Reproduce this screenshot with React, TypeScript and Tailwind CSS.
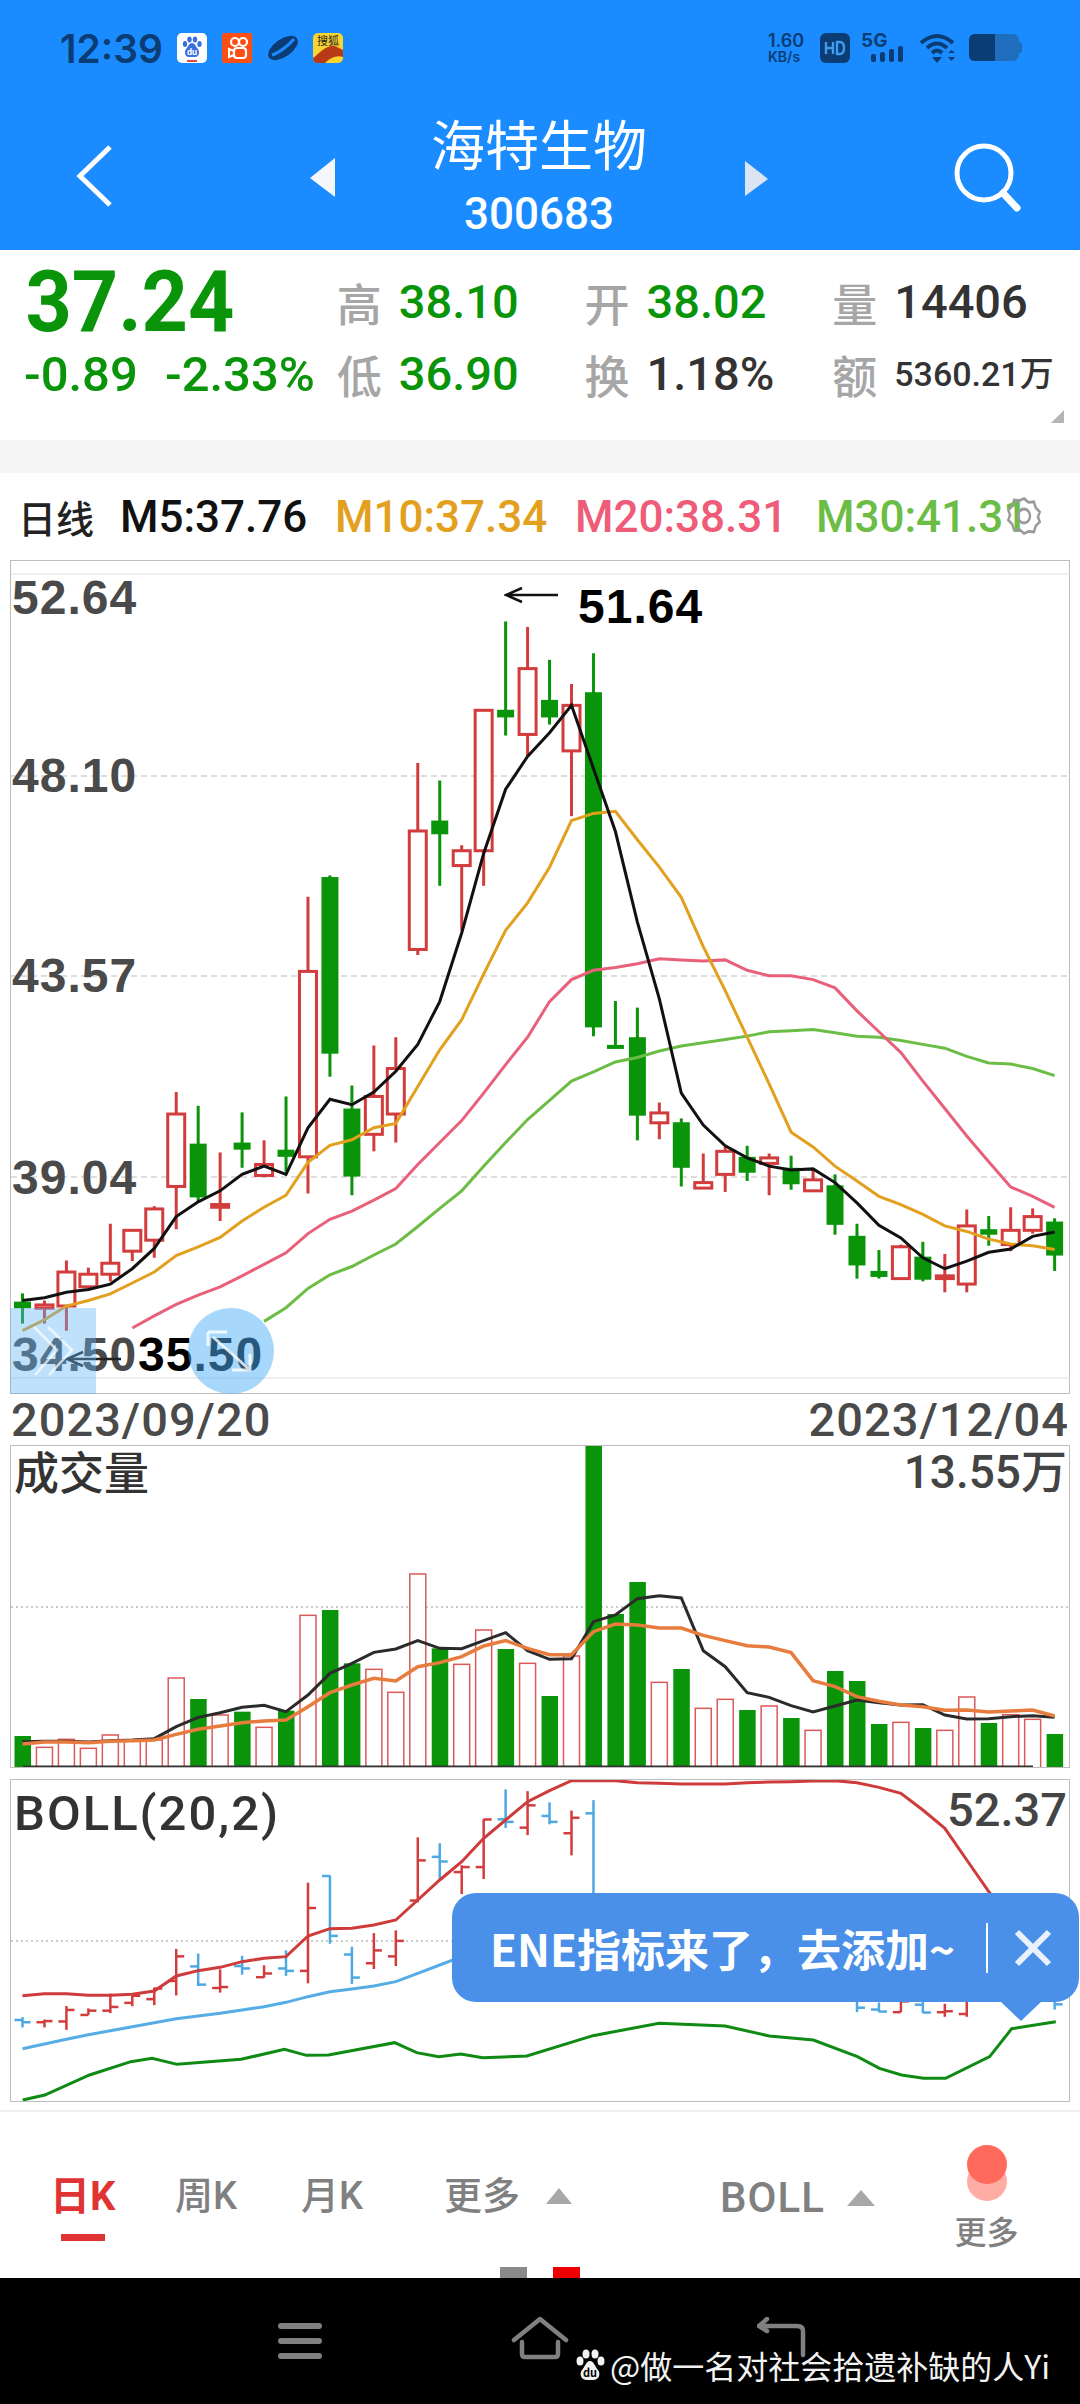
import React from "react";

const green = "#099409";
const red = "#d23c3c";

type Candle = [string, number, number, number, number];

// high, low, body top, body bottom
const candles: Candle[] = [
  ["g", 1337, 1392, 1352, 1364],
  ["r", 1350, 1392, 1358, 1364],
  ["r", 1277, 1405, 1298, 1360],
  ["r", 1290, 1325, 1302, 1325],
  ["r", 1210, 1315, 1282, 1302],
  ["r", 1222, 1278, 1222, 1260],
  ["r", 1178, 1272, 1183, 1240],
  ["r", 970, 1220, 1010, 1142],
  ["g", 995, 1170, 1064, 1162],
  ["r", 1080, 1205, 1175, 1180],
  ["g", 1007, 1108, 1062, 1075],
  ["r", 1058, 1125, 1102, 1122],
  ["g", 978, 1115, 1075, 1088],
  ["r", 614, 1155, 750, 1088],
  ["g", 575, 942, 578, 900],
  ["g", 958, 1158, 1000, 1124],
  ["r", 885, 1078, 978, 1047],
  ["r", 870, 1062, 927, 1010],
  ["r", 370, 720, 494, 710],
  ["g", 402, 594, 475, 500],
  ["r", 520, 675, 530, 557],
  ["r", 272, 594, 274, 530],
  ["g", 112, 320, 273, 287],
  ["r", 122, 358, 198, 318],
  ["g", 182, 300, 255, 287],
  ["r", 226, 467, 265, 348],
  ["g", 170, 868, 241, 852],
  ["g", 804, 890, 884, 889],
  ["g", 816, 1058, 870, 1013],
  ["r", 989, 1056, 1008, 1026],
  ["g", 1018, 1142, 1025, 1108],
  ["r", 1082, 1145, 1135, 1145],
  ["r", 1070, 1152, 1078, 1120],
  ["g", 1068, 1132, 1088, 1117],
  ["r", 1082, 1158, 1090, 1100],
  ["g", 1086, 1148, 1108, 1138],
  ["r", 1110, 1150, 1130, 1150],
  ["g", 1120, 1230, 1140, 1212],
  ["g", 1210, 1310, 1232, 1286],
  ["g", 1258, 1310, 1296, 1307],
  ["r", 1248, 1310, 1252, 1310],
  ["g", 1243, 1315, 1270, 1312],
  ["r", 1265, 1335, 1305, 1310],
  ["r", 1184, 1335, 1214, 1320],
  ["g", 1196, 1250, 1220, 1230],
  ["r", 1180, 1260, 1222, 1248],
  ["r", 1182, 1228, 1197, 1222],
  ["g", 1200, 1296, 1206, 1268],
];

const m5 = [1350, 1345, 1335, 1330, 1320, 1292, 1255, 1197, 1170, 1150, 1120, 1105, 1120, 1035, 983, 993, 970, 932, 883, 805, 680, 535, 418, 358, 315, 265, 380, 495, 660, 800, 972, 1030, 1068, 1090, 1105, 1112, 1110, 1135, 1172, 1213, 1236, 1272, 1292, 1278, 1262, 1256, 1233, 1225];
const m10 = [1405, 1385, 1360, 1350, 1338, 1318, 1298, 1268, 1252, 1235, 1205, 1180, 1158, 1098, 1067, 1057, 1035, 1027, 960, 893, 838, 755, 675, 625, 560, 475, 462, 458, 510, 560, 615, 705, 785, 870, 955, 1043, 1070, 1105, 1132, 1160, 1175, 1193, 1214, 1224, 1238, 1247, 1250, 1257];
const m20 = [1400, 1378, 1357, 1340, 1325, 1305, 1284, 1263, 1228, 1202, 1187, 1167, 1146, 1102, 1062, 1022, 972, 920, 870, 805, 765, 748, 743, 736, 727, 729, 731, 729, 748, 758, 758, 765, 780, 822, 860, 898, 950, 1000, 1050, 1097, 1143, 1160, 1180];
const m30 = [1388, 1363, 1328, 1303, 1288, 1267, 1247, 1215, 1182, 1150, 1105, 1062, 1020, 985, 950, 933, 915, 907, 895, 886, 880, 874, 868, 860, 858, 856, 862, 868, 870, 876, 883, 890, 905, 917, 919, 927, 940];

const volumes: [string, number][] = [
  ["g", 1008], ["r", 1042], ["r", 1018], ["r", 1045], ["r", 1005], ["r", 1020], ["r", 1020], ["r", 834],
  ["g", 897], ["r", 945], ["g", 935], ["r", 982], ["g", 932], ["r", 646], ["g", 630], ["g", 790],
  ["r", 808], ["r", 877], ["r", 522], ["g", 745], ["r", 793], ["r", 690], ["g", 747], ["r", 790],
  ["g", 888], ["r", 768], ["g", 137], ["g", 642], ["g", 546], ["r", 847], ["g", 807], ["r", 925],
  ["r", 898], ["g", 930], ["r", 918], ["g", 954], ["r", 991], ["g", 813], ["g", 843], ["g", 972],
  ["r", 967], ["g", 984], ["r", 991], ["r", 891], ["g", 969], ["r", 944], ["r", 958], ["g", 1002],
];
const volBlack = [1025, 1024, 1024, 1026, 1022, 1020, 1016, 980, 952, 938, 922, 916, 935, 885, 820, 790, 757, 747, 722, 745, 746, 722, 698, 752, 778, 776, 665, 645, 596, 587, 594, 752, 800, 878, 892, 917, 936, 918, 900, 908, 915, 914, 945, 957, 956, 950, 947, 952];
const volOrange = [1032, 1026, 1026, 1028, 1024, 1022, 1020, 1003, 988, 978, 968, 963, 960, 920, 878, 855, 835, 843, 800, 788, 770, 738, 722, 745, 764, 764, 695, 672, 675, 684, 684, 706, 722, 737, 741, 758, 842, 860, 890, 904, 915, 920, 931, 930, 936, 933, 930, 948];

const bollUpper = [707, 701, 701, 706, 706, 703, 693, 648, 632, 622, 605, 595, 590, 528, 506, 505, 495, 480, 420, 360, 305, 235, 180, 125, 92, 62, 62, 62, 68, 70, 72, 72, 72, 68, 66, 65, 63, 62, 68, 82, 100, 150, 205, 300, 395, 470];
const bollMid = [866, 852, 838, 824, 812, 800, 788, 776, 768, 760, 750, 740, 727, 710, 695, 687, 678, 665, 640, 615, 590];
const bollLower: [number, number][] = [[33, 1020], [65, 1005], [130, 945], [190, 905], [221, 895], [257, 913], [350, 898], [413, 868], [445, 886], [477, 885], [573, 848], [605, 878], [637, 890], [669, 882], [701, 893], [765, 888], [861, 827], [957, 790], [1053, 798], [1117, 828], [1181, 840], [1245, 890], [1277, 925], [1309, 945], [1341, 955], [1373, 955], [1437, 890], [1469, 806], [1533, 785]];

const xOf = (i: number) => 22.5 + 21.96 * i;
const priceY = (z: number) => 560 + z / 1.823;
const volY = (z: number) => 1400 + z / 3;
const bollY = (z: number) => 1760 + z / 3;
// same candle data on the boll scale
const bollFromPrice = (z: number) => bollY(88 + 0.558 * (z - 112));

const pts = (ys: number[], start: number, yFn: (n: number) => number) =>
  ys.map((y, i) => `${xOf(i + start)},${yFn(y)}`).join(" ");

function PriceChart() {
  return (
    <svg className="block" width="1060" height="832" viewBox="11 561 1060 832">
      <line x1="11" x2="1070" y1="574" y2="574" stroke="#dddddd" />
      <line x1="11" x2="1070" y1="1378" y2="1378" stroke="#dddddd" />
      {[776, 976, 1177].map((y) => (
        <line key={y} x1="11" x2="1070" y1={y} y2={y} stroke="#bbbbbb" strokeDasharray="6 4" />
      ))}
      {candles.map(([c, hi, lo, top, bot], i) => {
        const x = xOf(i);
        const color = c === "g" ? green : red;
        return (
          <g key={i}>
            <line x1={x} x2={x} y1={priceY(hi)} y2={priceY(lo)} stroke={color} strokeWidth="3" />
            {c === "g" ? (
              <rect x={x - 8.5} y={priceY(top)} width="17" height={Math.max(priceY(bot) - priceY(top), 4)} fill={color} />
            ) : (
              <rect x={x - 8.5} y={priceY(top)} width="17" height={Math.max(priceY(bot) - priceY(top), 2)} fill="#ffffff" stroke={color} strokeWidth="3" />
            )}
          </g>
        );
      })}
      <polyline points={pts(m30, 11, priceY)} fill="none" stroke="#6cbd45" strokeWidth="3" />
      <polyline points={pts(m20, 5, priceY)} fill="none" stroke="#e8607a" strokeWidth="3" />
      <polyline points={pts(m10, 0, priceY)} fill="none" stroke="#e2a01e" strokeWidth="3" />
      <polyline points={pts(m5, 0, priceY)} fill="none" stroke="#111111" strokeWidth="3" />
    </svg>
  );
}

function VolumeChart() {
  return (
    <svg className="block" width="1060" height="321" viewBox="11 1446 1060 321">
      <line x1="11" x2="1070" y1="1607" y2="1607" stroke="#cccccc" strokeWidth="2" strokeDasharray="2 3" />
      {volumes.map(([c, top], i) => {
        const x = xOf(i);
        return c === "g" ? (
          <rect key={i} x={x - 8} y={volY(top)} width="16.5" height={1768 - volY(top)} fill={green} />
        ) : (
          <rect key={i} x={x - 8} y={volY(top)} width="16" height={1768 - volY(top)} fill="#ffffff" stroke="#dc5a5a" strokeWidth="1.5" />
        );
      })}
      <line x1="23" x2="1033" y1="1767" y2="1767" stroke="#333333" strokeWidth="3" />
      <polyline points={pts(volBlack, 0, volY)} fill="none" stroke="#2b2b2b" strokeWidth="3" />
      <polyline points={pts(volOrange, 0, volY)} fill="none" stroke="#e87b3e" strokeWidth="3.5" />
    </svg>
  );
}

function BollChart() {
  return (
    <svg className="block" width="1060" height="321" viewBox="11 1780 1060 321">
      <line x1="11" x2="1070" y1="1941" y2="1941" stroke="#cccccc" strokeWidth="2" strokeDasharray="2 3" />
      {candles.map(([c, hi, lo, top, bot], i) => {
        const x = xOf(i);
        const color = c === "g" ? "#4ea8e2" : red;
        const open = c === "g" ? top : bot;
        const close = c === "g" ? bot : top;
        return (
          <g key={i} stroke={color} strokeWidth="2.5">
            <line x1={x} x2={x} y1={bollFromPrice(hi)} y2={bollFromPrice(lo)} />
            <line x1={x - 8} x2={x} y1={bollFromPrice(open)} y2={bollFromPrice(open)} />
            <line x1={x} x2={x + 8} y1={bollFromPrice(close)} y2={bollFromPrice(close)} />
          </g>
        );
      })}
      <polyline points={pts(bollUpper, 0, bollY)} fill="none" stroke="#cf3a3a" strokeWidth="3" />
      <polyline points={pts(bollMid, 0, bollY)} fill="none" stroke="#56ade6" strokeWidth="3" />
      <polyline
        points={bollLower.map(([x, y]) => `${x / 1.452},${bollY(y)}`).join(" ")}
        fill="none"
        stroke="#0f8a12"
        strokeWidth="3"
      />
    </svg>
  );
}

function StatusBar() {
  const ink = "#0b3c73";
  return (
    <div className="flex h-[96px] items-center pl-[60px]">
      <span className="w-[117px] text-[39px] leading-none font-semibold font-['Inter',sans-serif] text-[#0b3c73]">12:39</span>
      <svg width="30" height="30" viewBox="0 0 30 30" className="mr-[15px]">
        <rect width="30" height="30" rx="5" fill="#ffffff" />
        <ellipse cx="8" cy="11" rx="2.2" ry="3" fill="#3b6fe0" />
        <ellipse cx="12.5" cy="6.5" rx="2.2" ry="3" fill="#3b6fe0" />
        <ellipse cx="18" cy="6.5" rx="2.2" ry="3" fill="#3b6fe0" />
        <ellipse cx="22.5" cy="11" rx="2.2" ry="3" fill="#3b6fe0" />
        <path d="M15 10c-3 0-4 4-6 6-2 3-1 8 3 8h6c4 0 5-5 3-8-2-2-3-6-6-6z" fill="#3b6fe0" />
        <text x="15" y="22" fontSize="9" fontWeight="700" textAnchor="middle" fill="#ffffff">du</text>
        <rect x="10" y="27" width="10" height="2" fill="#e0483e" />
      </svg>
      <svg width="30" height="30" viewBox="0 0 30 30" className="mr-[15px]">
        <rect width="30" height="30" rx="2" fill="#fb4f14" />
        <circle cx="13" cy="9" r="4" fill="none" stroke="#ffffff" strokeWidth="2.2" />
        <circle cx="21" cy="9" r="4" fill="none" stroke="#ffffff" strokeWidth="2.2" />
        <rect x="12" y="15" width="12" height="10" rx="3" fill="none" stroke="#ffffff" strokeWidth="2.2" />
        <path d="M12 18l-5 -2v8l5-2" fill="none" stroke="#ffffff" strokeWidth="2" />
      </svg>
      <svg width="32" height="30" viewBox="0 0 32 30" className="mr-[14px]">
        <ellipse cx="16" cy="15" rx="9" ry="17" transform="rotate(55 16 15)" fill={ink} />
        <path d="M5 22C12 20 22 12 27 6" stroke="#1a8cff" strokeWidth="3" fill="none" />
      </svg>
      <svg width="30" height="30" viewBox="0 0 30 30">
        <rect width="30" height="30" rx="5" fill="#f9d32f" />
        <path d="M0 25C6 21 12 12 22 13L30 17V24C24 22 18 24 12 30H5Q0 30 0 25z" fill="#b83a14" />
        <text x="15" y="12" fontSize="11" textAnchor="middle" fill="#222222" fontFamily="Noto Sans CJK SC">搜狐</text>
      </svg>
      <div className="ml-[425px] flex w-[42px] flex-col font-['Inter',sans-serif] text-[#0b3c73] font-semibold">
        <span className="text-[18px] leading-[17px]">1.60</span>
        <span className="text-[14px] leading-[15px]">KB/s</span>
      </div>
      <svg width="31" height="30" viewBox="0 0 31 30" className="ml-[10px]">
        <rect width="30" height="30" rx="6" fill={ink} />
        <path d="M6 9v12M13 9v12M6 15h7M17 9v12h3q4 0 4-6t-4-6z" fill="none" stroke="#3d9bf0" strokeWidth="2.4" />
      </svg>
      <div className="relative ml-[10px] h-[30px] w-[46px]">
        <span className="absolute left-0 top-[-2px] text-[19px] leading-none font-bold font-['Inter',sans-serif] text-[#0b3c73]">5G</span>
        <svg width="46" height="30" viewBox="0 0 46 30">
          <rect x="10" y="21" width="5" height="8" rx="2" fill={ink} />
          <rect x="19" y="19" width="5" height="10" rx="2" fill={ink} />
          <rect x="28" y="16" width="5" height="13" rx="2" fill={ink} />
          <rect x="37" y="13" width="5" height="16" rx="2" fill={ink} />
        </svg>
      </div>
      <svg width="38" height="30" viewBox="0 0 38 30" className="ml-[12px]">
        <path d="M2 10Q18 -4 34 10M8 15Q18 6 28 15M13 20Q18 15 23 20" fill="none" stroke={ink} strokeWidth="4" />
        <path d="M13 24h10l-5 6zM29 20l3.5 -3 3.5 3zM29 24h7l-3.5 4z" fill={ink} />
      </svg>
      <svg width="54" height="28" viewBox="0 0 54 28" className="ml-[12px]">
        <rect width="50" height="27" rx="6" fill="#1f6dbd" />
        <path d="M6 0H26V27H6Q0 27 0 21V6Q0 0 6 0z" fill={ink} />
        <rect x="50" y="8" width="3" height="11" rx="1.5" fill="#1f6dbd" />
      </svg>
    </div>
  );
}

function NavHeader() {
  return (
    <div className="relative flex flex-1 items-start text-white">
      <div className="flex w-[310px] pl-[76px] pt-[49px]">
        <svg width="36" height="62" viewBox="0 0 36 62">
          <path d="M34 2L4 31L34 60" fill="none" stroke="#ffffff" strokeWidth="5" />
        </svg>
      </div>
      <svg width="25" height="39" viewBox="0 0 25 39" className="mt-[62px]">
        <path d="M25 0V39L0 20z" fill="#f4f8fc" />
      </svg>
      <div className="-ml-[1px] flex w-[410px] flex-col items-center pt-[17px]">
        <span className="text-[54px] leading-[60px] font-normal font-['Noto_Sans_CJK_SC',sans-serif]">海特生物</span>
        <span className="mt-[21px] text-[44px] leading-[40px] font-medium">300683</span>
      </div>
      <svg width="23" height="35" viewBox="0 0 23 35" className="ml-[1px] mt-[65px]">
        <path d="M0 0V35L23 18z" fill="#dbe5f2" />
      </svg>
      <svg width="68" height="70" viewBox="0 0 68 70" className="ml-[186px] mt-[47px]">
        <circle cx="30" cy="30" r="27" fill="none" stroke="#ffffff" strokeWidth="5" />
        <path d="M49 50L63 65" stroke="#ffffff" strokeWidth="7" strokeLinecap="round" />
      </svg>
    </div>
  );
}

function Stat({ label, value, color, small }: { label: string; value: string; color: string; small?: boolean }) {
  return (
    <div className="flex w-[248px] items-center">
      <span className="w-[62px] text-[45px] leading-none font-medium text-[#a6a6a6] font-['Noto_Sans_CJK_SC',sans-serif]">{label}</span>
      <span className={small ? "whitespace-nowrap text-[34px] font-medium text-[#333333]" : "text-[47px] font-medium"} style={small ? undefined : { color }}>
        {value}
      </span>
    </div>
  );
}

function Quote() {
  return (
    <div className="relative h-[190px] bg-white pt-[16px]">
      <div className="flex h-[72px] items-center">
        <span className="w-[337px] origin-left scale-x-[0.94] pl-[27px] text-[86px] leading-[72px] font-bold text-[#099409]">37.24</span>
        <Stat label="高" value="38.10" color={green} />
        <Stat label="开" value="38.02" color={green} />
        <Stat label="量" value="14406" color="#333333" />
      </div>
      <div className="flex h-[72px] items-center">
        <div className="flex w-[337px] pl-[24px] text-[49px] leading-none font-medium text-[#099409]">
          <span className="w-[141px]">-0.89</span>
          <span className="whitespace-nowrap">-2.33%</span>
        </div>
        <Stat label="低" value="36.90" color={green} />
        <Stat label="换" value="1.18%" color="#333333" />
        <Stat label="额" value="5360.21万" color="#333333" small />
      </div>
      <svg width="13" height="13" viewBox="0 0 13 13" className="absolute right-[16px] top-[160px]">
        <path d="M13 0V13H0z" fill="#b5b5b5" />
      </svg>
    </div>
  );
}

function Legend() {
  return (
    <div className="relative flex h-[87px] items-center bg-white pl-[18px] text-[44px] font-medium leading-none">
      <span className="w-[102px] text-[38px] font-medium text-[#222222] font-['Noto_Sans_CJK_SC',sans-serif]">日线</span>
      <span className="w-[215px] text-[#111111]">M5:37.76</span>
      <span className="w-[240px] text-[#e2a01e]">M10:37.34</span>
      <span className="w-[241px] text-[#ee5c78]">M20:38.31</span>
      <span className="whitespace-nowrap text-[#6cbd45]">M30:41.31</span>
      <svg width="36" height="42" viewBox="0 0 24 24" preserveAspectRatio="none" className="absolute left-[1006px] top-[22px]" fill="none" stroke="#9a9a9a" strokeWidth="1.6">
        <path d="M12 2l3 2.2 3.6-.3 1.2 3.4 2.7 2.4-1.2 2.8 1.2 2.8-2.7 2.4-1.2 3.4-3.6-.3L12 22l-3-2.2-3.6.3-1.2-3.4-2.7-2.4 1.2-2.8-1.2-2.8 2.7-2.4 1.2-3.4 3.6.3z" />
        <circle cx="12" cy="12" r="4" />
      </svg>
    </div>
  );
}

const chartLabel = "absolute text-[48px] tracking-[1px] leading-none font-bold font-['Liberation_Sans',sans-serif] text-[#4a4a4a]";

function Tooltip() {
  return (
    <div className="absolute right-[-10px] top-[113px] flex h-[109px] w-[627px] items-center rounded-[24px] bg-[#4a90e8] pl-[38px]">
      <span className="w-[496px] whitespace-nowrap text-[44px] leading-none font-bold text-white font-['Noto_Sans_CJK_SC',sans-serif]">ENE指标来了，去添加~</span>
      <span className="h-[50px] w-[2px] bg-white" />
      <svg width="38" height="38" viewBox="0 0 38 38" className="ml-[26px]">
        <path d="M3 3L35 35M35 3L3 35" stroke="#e9f2fc" strokeWidth="6" />
      </svg>
      <svg width="42" height="20" viewBox="0 0 42 20" className="absolute left-[548px] top-[108px]">
        <path d="M0 0H42L21 20z" fill="#4a90e8" />
      </svg>
    </div>
  );
}

function Tabs() {
  const tab = "text-[38px] leading-none font-medium text-[#808080]";
  return (
    <div className="relative flex h-[168px] items-start border-t-2 border-[#eeeeee] bg-white pl-[50px] pt-[65px]">
      <div className="flex w-[125px] flex-col">
        <span className="text-[40px] leading-none font-bold text-[#e03434]">日K</span>
        <span className="ml-[11px] mt-[17px] h-[7px] w-[44px] bg-[#e03434]" />
      </div>
      <span className={`${tab} w-[126px]`}>周K</span>
      <span className={`${tab} w-[143px]`}>月K</span>
      <div className="flex w-[276px] items-center gap-[26px]">
        <span className={tab}>更多</span>
        <svg width="26" height="16" viewBox="0 0 26 16"><path d="M13 0L26 16H0z" fill="#a8a8a8" /></svg>
      </div>
      <div className="flex w-[235px] items-center gap-[22px]">
        <span className="text-[42px] tracking-[1px] leading-none font-medium text-[#808080]">BOLL</span>
        <svg width="28" height="16" viewBox="0 0 28 16"><path d="M14 0L28 16H0z" fill="#a8a8a8" /></svg>
      </div>
      <div className="-mt-[32px] flex w-[63px] flex-col items-center">
        <svg width="40" height="56" viewBox="0 0 40 56">
          <rect x="0" y="17" width="40" height="39" rx="20" fill="#ffaca5" />
          <rect x="0" y="0" width="40" height="39" rx="20" fill="#ff6a5c" />
        </svg>
        <span className="mt-[16px] whitespace-nowrap text-[32px] leading-none font-medium text-[#808080]">更多</span>
      </div>
      <span className="absolute left-[500px] top-[155px] h-[11px] w-[27px] bg-[#8a8a8a]" />
      <span className="absolute left-[553px] top-[155px] h-[11px] w-[27px] bg-[#ee0000]" />
    </div>
  );
}

function NavBar() {
  return (
    <div className="relative flex h-[126px] items-start bg-black pl-[278px] pt-[45px]">
      <div className="flex h-[36px] w-[44px] flex-col justify-between">
        <span className="h-[6px] rounded-full bg-[#808080]" />
        <span className="h-[6px] rounded-full bg-[#808080]" />
        <span className="h-[6px] rounded-full bg-[#808080]" />
      </div>
      <svg width="58" height="44" viewBox="0 0 58 44" className="ml-[189px] -mt-[7px]" fill="none" stroke="#808080" strokeWidth="4.5" strokeLinecap="round" strokeLinejoin="round">
        <path d="M3 24L29 3L55 24M11 26V38Q11 41 14 41H44Q47 41 47 38V26" />
      </svg>
      <svg width="50" height="42" viewBox="0 0 50 42" className="ml-[188px] -mt-[6px]" fill="none" stroke="#808080" strokeWidth="4.5" strokeLinecap="round" strokeLinejoin="round">
        <path d="M10 2L2 9L10 14M3 9H40Q46 9 46 14V38" />
      </svg>
      <div className="absolute left-[575px] top-[70px] flex items-center text-[32px] leading-[34px] text-[#f2f2f2] font-['Noto_Sans_CJK_SC',sans-serif]">
        <svg width="30" height="32" viewBox="0 0 30 32" className="mr-[5px]">
          <ellipse cx="5" cy="12" rx="3.5" ry="4.5" fill="#f2f2f2" />
          <ellipse cx="11" cy="5" rx="3.5" ry="4.5" fill="#f2f2f2" />
          <ellipse cx="20" cy="5" rx="3.5" ry="4.5" fill="#f2f2f2" />
          <ellipse cx="26" cy="12" rx="3.5" ry="4.5" fill="#f2f2f2" />
          <path d="M15 12c-4 0-5 6-8 9-3 4-1 10 5 10h6c6 0 8-6 5-10-3-3-4-9-8-9z" fill="#f2f2f2" />
          <text x="15" y="28" fontSize="11" fontWeight="700" textAnchor="middle" fill="#000000">du</text>
        </svg>
        <span className="whitespace-nowrap">@做一名对社会拾遗补缺的人Yi</span>
      </div>
    </div>
  );
}

export default function App() {
  return (
    <div className="relative h-[2404px] w-[1080px] overflow-hidden bg-white font-['Roboto','Noto_Sans_CJK_SC',sans-serif]">
      <div className="flex h-[250px] flex-col bg-[#1a8cff]">
        <StatusBar />
        <NavHeader />
      </div>
      <Quote />
      <div className="h-[33px] bg-[#f5f5f5]" />
      <Legend />

      <div className="relative mx-[10px] h-[834px] border border-[#bdbdbd]">
        <PriceChart />
        <span className={`${chartLabel} left-[1px] top-[13px]`}>52.64</span>
        <span className={`${chartLabel} left-[1px] top-[191px]`}>48.10</span>
        <span className={`${chartLabel} left-[1px] top-[391px]`}>43.57</span>
        <span className={`${chartLabel} left-[1px] top-[593px]`}>39.04</span>
        <span className={`${chartLabel} left-[1px] top-[770px]`}>34.50</span>
        <span className={`${chartLabel} left-[127px] top-[770px] !text-black`}>35.50</span>
        <span className={`${chartLabel} left-[567px] top-[22px] !text-black`}>51.64</span>
        <svg width="54" height="20" viewBox="0 0 54 20" className="absolute left-[493px] top-[24px]" fill="none" stroke="#111111" strokeWidth="2.5">
          <path d="M54 10H2M18 3L2 10L18 17" />
        </svg>
        <svg width="56" height="20" viewBox="0 0 56 20" className="absolute left-[54px] top-[788px]" fill="none" stroke="#222222" strokeWidth="2.5">
          <path d="M56 10H2M18 3L2 10L18 17" />
        </svg>
        <div className="absolute left-[-1px] top-[747px] h-[86px] w-[86px] bg-[#5fb4f8]/40">
          <svg width="86" height="86" viewBox="0 0 86 86" fill="none" stroke="#ffffff" strokeOpacity="0.7" strokeWidth="2.5">
            <path d="M24 19L47 42L25 67M38 19L62 42L39 67" />
          </svg>
        </div>
        <div className="absolute left-[177px] top-[747px] h-[86px] w-[86px] rounded-full bg-[#4fb0f8]/50">
          <svg width="86" height="86" viewBox="0 0 86 86" fill="none" stroke="#ffffff" strokeOpacity="0.8" strokeWidth="3">
            <path d="M20 24H39M20 24V38M25 29L62 62M44 62H62V46" />
          </svg>
        </div>
      </div>

      <div className="flex h-[51px] items-center justify-between px-[11px] text-[47px] tracking-[1px] leading-none font-medium text-[#4a4a4a]">
        <span>2023/09/20</span>
        <span>2023/12/04</span>
      </div>

      <div className="relative mx-[10px] h-[323px] border border-[#bdbdbd]">
        <VolumeChart />
        <span className="absolute left-[3px] top-[6px] text-[45px] leading-none font-medium text-[#333333]">成交量</span>
        <span className="absolute right-[2px] top-[3px] text-[46px] leading-none font-medium text-[#444444]">13.55万</span>
      </div>

      <div className="relative mx-[10px] mt-[11px] h-[323px] border border-[#bdbdbd]">
        <BollChart />
        <span className="absolute left-[3px] top-[9px] text-[49px] tracking-[2px] leading-none font-medium text-[#333333]">BOLL(20,2)</span>
        <span className="absolute right-[2px] top-[6px] text-[47px] leading-none font-medium text-[#444444]">52.37</span>
        <Tooltip />
      </div>

      <div className="h-[8px] bg-white" />
      <Tabs />
      <NavBar />
    </div>
  );
}
